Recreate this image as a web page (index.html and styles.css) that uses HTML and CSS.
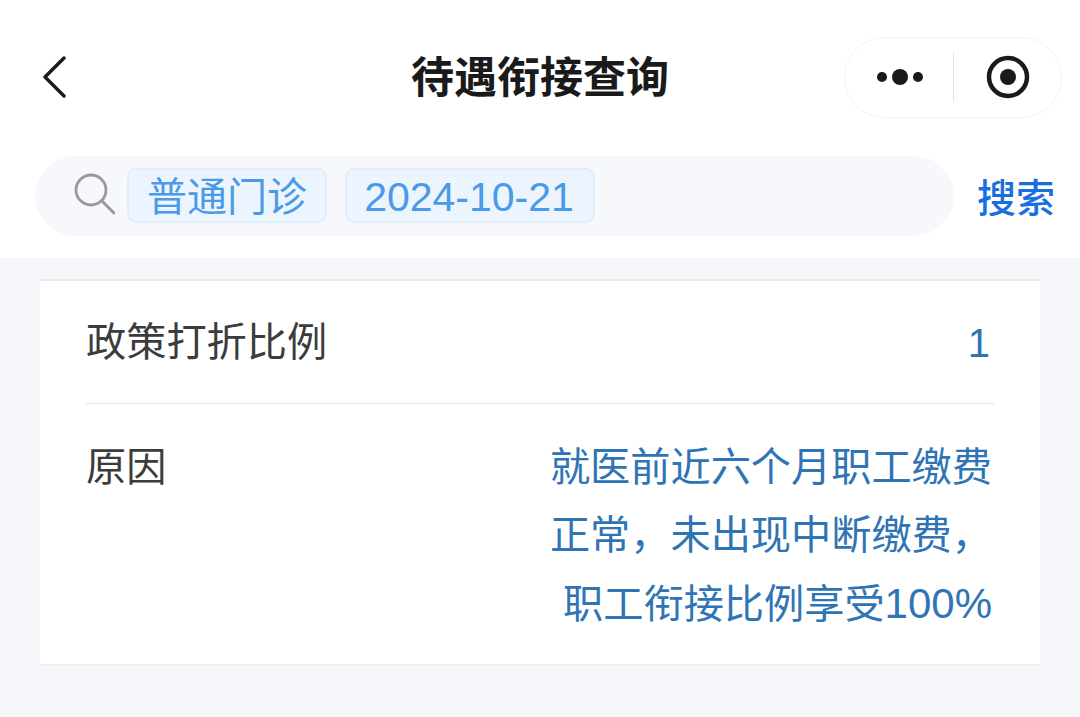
FILE: index.html
```html
<!DOCTYPE html>
<html lang="zh-CN">

<head>
    <meta charset="UTF-8">
    <meta name="viewport" content="width=device-width, initial-scale=1.0">
    <title>待遇衔接查询</title>
    <link rel="stylesheet" href="styles.css">
</head>

<body>
    <header class="nav">
        <svg class="back" viewBox="0 0 24 42" width="24" height="42">
            <path d="M22 2 L3 21 L22 40" fill="none" stroke="#1a1a1a" stroke-width="3.4" stroke-linecap="round" stroke-linejoin="round" />
        </svg>
        <h1 class="nav-title">待遇衔接查询</h1>
        <div class="capsule">
            <svg class="capsule-more" viewBox="0 0 48 20" width="48" height="20">
                <circle cx="6" cy="10" r="5" fill="#1a1a1a" />
                <circle cx="24" cy="10" r="8" fill="#1a1a1a" />
                <circle cx="42" cy="10" r="5" fill="#1a1a1a" />
            </svg>
            <span class="capsule-line"></span>
            <svg class="capsule-close" viewBox="0 0 44 44" width="44" height="44">
                <circle cx="22" cy="22" r="19" fill="none" stroke="#1a1a1a" stroke-width="4.5" />
                <circle cx="22" cy="22" r="8" fill="#1a1a1a" />
            </svg>
        </div>
    </header>

    <section class="search-bar">
        <div class="search-box">
            <svg class="search-icon" viewBox="0 0 42 42" width="42" height="42">
                <circle cx="18" cy="17" r="15" fill="none" stroke="#999" stroke-width="2.8" />
                <path d="M29 28 L41 40" fill="none" stroke="#999" stroke-width="3" stroke-linecap="round" />
            </svg>
            <span class="tag tag-type">普通门诊</span>
            <span class="tag tag-date">2024-10-21</span>
        </div>
        <span class="search-btn">搜索</span>
    </section>

    <main class="content">
        <div class="card">
            <div class="row row-rate">
                <span class="label">政策打折比例</span>
                <span class="value value-rate">1</span>
            </div>
            <div class="row row-reason">
                <span class="label">原因</span>
                <div class="value value-reason">
                    <div class="reason-line">就医前近六个月职工缴费</div>
                    <div class="reason-line">正常，未出现中断缴费，</div>
                    <div class="reason-line">
                        <span>职工衔接比例享受</span>
                        <span class="percent">100%</span>
                    </div>
                </div>
            </div>
        </div>
    </main>
</body>

</html>
```

FILE: styles.css
```css
* {
    box-sizing: border-box;
}

html,
body {
    height: 100%;
}

body {
    margin: 0;
    display: flex;
    flex-direction: column;
    overflow: hidden;
    background: #f4f6fa;
    font-family: "Liberation Sans", "Noto Sans CJK SC", sans-serif;
}

.nav {
    position: relative;
    display: flex;
    align-items: center;
    justify-content: space-between;
    height: 155px;
    padding: 0 18px 1px 42px;
    background: #fff;
}

.nav-title {
    position: absolute;
    left: 0;
    right: 0;
    top: 50px;
    margin: 0;
    font-size: 43px;
    line-height: 56px;
    font-weight: 700;
    text-align: center;
    color: #1a1a1a;
}

.capsule {
    display: flex;
    align-items: center;
    width: 218px;
    height: 81px;
    padding-left: 31px;
    border: 1px solid #f3f3f3;
    border-radius: 41px;
    background: #fff;
}

.capsule-line {
    width: 1px;
    height: 50px;
    margin: 0 32px 0 29px;
    background: #e4e4e4;
}

.search-bar {
    display: flex;
    align-items: center;
    height: 103px;
    padding: 0 25px 22px 35px;
    background: #fff;
}

.search-box {
    display: flex;
    flex-shrink: 0;
    align-items: center;
    width: 919px;
    height: 80px;
    padding-left: 38px;
    border-radius: 40px;
    background: #f6f8fb;
}

.search-icon {
    margin: -4px 12px 0 0;
}

.tag {
    display: block;
    height: 55px;
    border: 2px solid #e0eefc;
    border-radius: 9px;
    background: #ecf5fe;
    font-size: 40px;
    line-height: 54px;
    text-align: center;
    color: #4a9ae8;
}

.tag-type {
    width: 200px;
    margin-right: 18px;
}

.tag-date {
    width: 250px;
    padding-right: 2px;
    font-size: 41px;
}

.search-btn {
    margin: 0 0 2px 23px;
    font-size: 39px;
    font-weight: 500;
    white-space: nowrap;
    color: #1a6fe0;
}

.content {
    flex: 1;
    padding: 21px 40px 0;
}

.card {
    padding: 0 46px;
    height: 386px;
    border-top: 2px solid #e9ebee;
    border-bottom: 1px solid #eceef1;
    background: #fff;
}

.row {
    display: flex;
    justify-content: space-between;
}

.row-rate {
    align-items: center;
    height: 123px;
    padding-top: 2px;
    border-bottom: 1px solid #e4e4e4;
}

.row-reason {
    padding-top: 30px;
}

.label {
    font-size: 40.2px;
    line-height: 68px;
    color: #3c3c3c;
}

.value {
    font-size: 40px;
    line-height: 68px;
    color: #2f74b5;
}

.value-rate {
    padding-right: 4px;
}

.value-reason {
    padding-right: 2px;
    font-size: 40.2px;
}

.reason-line {
    display: flex;
    align-items: baseline;
    justify-content: flex-end;
    height: 68px;
}

.percent {
    font-size: 42px;
}
```
